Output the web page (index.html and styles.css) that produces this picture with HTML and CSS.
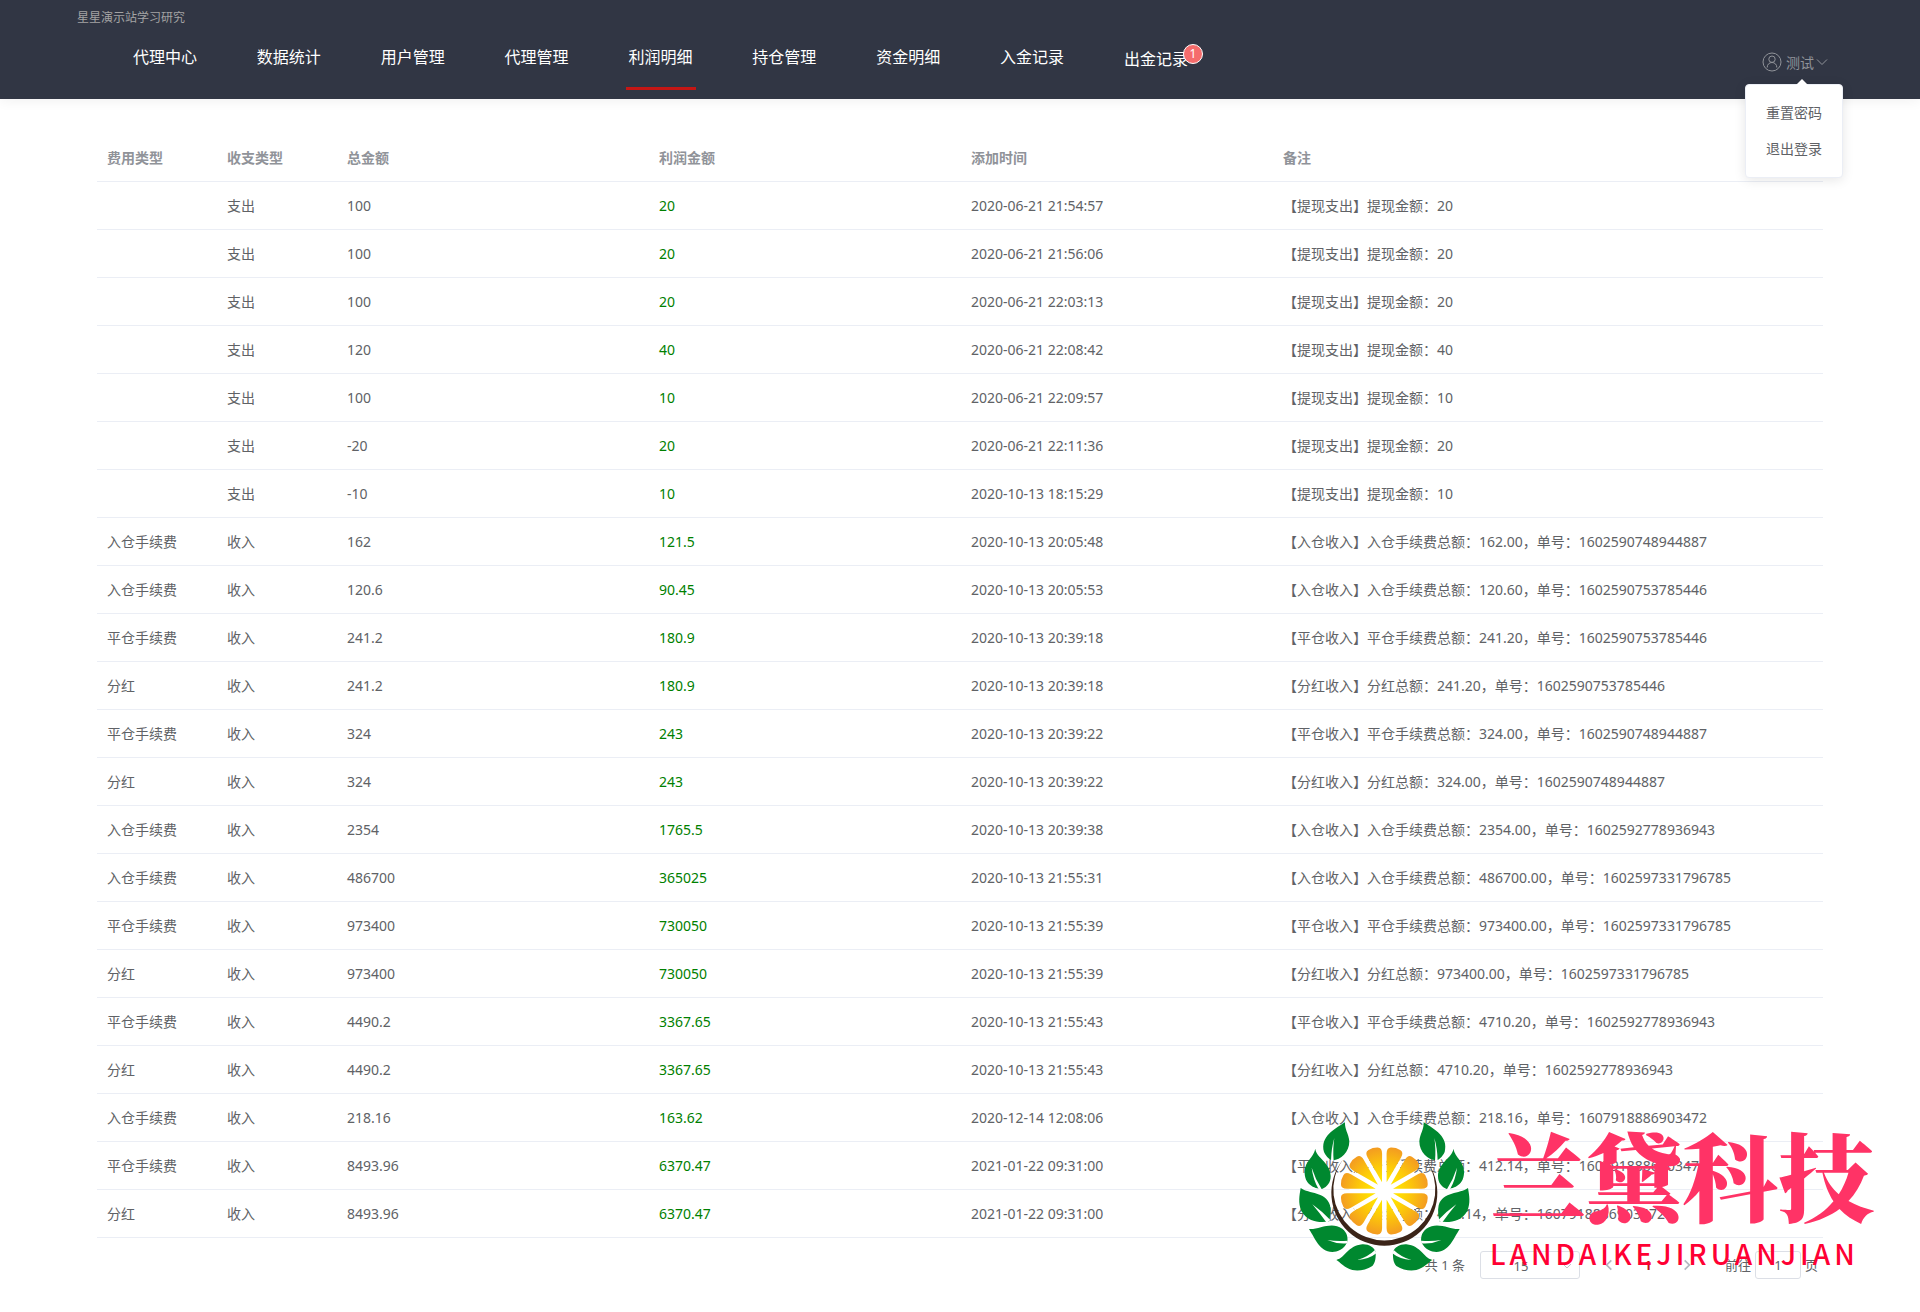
FILE: index.html
```html
<!DOCTYPE html>
<html lang="zh-CN">
<head>
<meta charset="utf-8">
<title>利润明细</title>
<link rel="stylesheet" href="styles.css">
</head>
<body>
<header class="header">
  <div class="brand">
    <p class="site-name">星星演示站学习研究</p>
    <nav class="nav">
      <a class="nav-link" href="#">代理中心</a>
      <a class="nav-link" href="#">数据统计</a>
      <a class="nav-link" href="#">用户管理</a>
      <a class="nav-link" href="#">代理管理</a>
      <a class="nav-link active" href="#">利润明细</a>
      <a class="nav-link" href="#">持仓管理</a>
      <a class="nav-link" href="#">资金明细</a>
      <a class="nav-link" href="#">入金记录</a>
      <a class="nav-link with-badge" href="#">出金记录<sup class="badge">1</sup></a>
    </nav>
  </div>
  <div class="user">
    <button class="user-button" type="button">
      <svg class="avatar" viewBox="0 0 20 20" fill="none" stroke="currentColor"><circle cx="10" cy="10" r="9"/><circle cx="10" cy="7.200" r="3.200"/><path d="M5.200 15.500c0-3 2-5 4.800-5s4.800 2 4.800 5"/></svg>
      <span>测试</span>
      <svg class="caret" viewBox="0 0 12 12" fill="none" stroke="currentColor"><path d="M1 3.500l5 5 5-5"/></svg>
    </button>
    <div class="menu">
      <a class="menu-item" href="#">重置密码</a>
      <a class="menu-item" href="#">退出登录</a>
    </div>
  </div>
</header>
<main class="main">
  <table class="table">
    <colgroup><col class="col-type"><col class="col-type"><col class="col-value"><col class="col-value"><col class="col-value"><col></colgroup>
    <thead>
      <tr><th>费用类型</th><th>收支类型</th><th>总金额</th><th>利润金额</th><th>添加时间</th><th>备注</th></tr>
    </thead>
    <tbody>
      <tr><td></td><td>支出</td><td>100</td><td class="profit">20</td><td>2020-06-21 21:54:57</td><td>【提现支出】提现金额：20</td></tr>
      <tr><td></td><td>支出</td><td>100</td><td class="profit">20</td><td>2020-06-21 21:56:06</td><td>【提现支出】提现金额：20</td></tr>
      <tr><td></td><td>支出</td><td>100</td><td class="profit">20</td><td>2020-06-21 22:03:13</td><td>【提现支出】提现金额：20</td></tr>
      <tr><td></td><td>支出</td><td>120</td><td class="profit">40</td><td>2020-06-21 22:08:42</td><td>【提现支出】提现金额：40</td></tr>
      <tr><td></td><td>支出</td><td>100</td><td class="profit">10</td><td>2020-06-21 22:09:57</td><td>【提现支出】提现金额：10</td></tr>
      <tr><td></td><td>支出</td><td>-20</td><td class="profit">20</td><td>2020-06-21 22:11:36</td><td>【提现支出】提现金额：20</td></tr>
      <tr><td></td><td>支出</td><td>-10</td><td class="profit">10</td><td>2020-10-13 18:15:29</td><td>【提现支出】提现金额：10</td></tr>
      <tr><td>入仓手续费</td><td>收入</td><td>162</td><td class="profit">121.5</td><td>2020-10-13 20:05:48</td><td>【入仓收入】入仓手续费总额：162.00，单号：1602590748944887</td></tr>
      <tr><td>入仓手续费</td><td>收入</td><td>120.6</td><td class="profit">90.45</td><td>2020-10-13 20:05:53</td><td>【入仓收入】入仓手续费总额：120.60，单号：1602590753785446</td></tr>
      <tr><td>平仓手续费</td><td>收入</td><td>241.2</td><td class="profit">180.9</td><td>2020-10-13 20:39:18</td><td>【平仓收入】平仓手续费总额：241.20，单号：1602590753785446</td></tr>
      <tr><td>分红</td><td>收入</td><td>241.2</td><td class="profit">180.9</td><td>2020-10-13 20:39:18</td><td>【分红收入】分红总额：241.20，单号：1602590753785446</td></tr>
      <tr><td>平仓手续费</td><td>收入</td><td>324</td><td class="profit">243</td><td>2020-10-13 20:39:22</td><td>【平仓收入】平仓手续费总额：324.00，单号：1602590748944887</td></tr>
      <tr><td>分红</td><td>收入</td><td>324</td><td class="profit">243</td><td>2020-10-13 20:39:22</td><td>【分红收入】分红总额：324.00，单号：1602590748944887</td></tr>
      <tr><td>入仓手续费</td><td>收入</td><td>2354</td><td class="profit">1765.5</td><td>2020-10-13 20:39:38</td><td>【入仓收入】入仓手续费总额：2354.00，单号：1602592778936943</td></tr>
      <tr><td>入仓手续费</td><td>收入</td><td>486700</td><td class="profit">365025</td><td>2020-10-13 21:55:31</td><td>【入仓收入】入仓手续费总额：486700.00，单号：1602597331796785</td></tr>
      <tr><td>平仓手续费</td><td>收入</td><td>973400</td><td class="profit">730050</td><td>2020-10-13 21:55:39</td><td>【平仓收入】平仓手续费总额：973400.00，单号：1602597331796785</td></tr>
      <tr><td>分红</td><td>收入</td><td>973400</td><td class="profit">730050</td><td>2020-10-13 21:55:39</td><td>【分红收入】分红总额：973400.00，单号：1602597331796785</td></tr>
      <tr><td>平仓手续费</td><td>收入</td><td>4490.2</td><td class="profit">3367.65</td><td>2020-10-13 21:55:43</td><td>【平仓收入】平仓手续费总额：4710.20，单号：1602592778936943</td></tr>
      <tr><td>分红</td><td>收入</td><td>4490.2</td><td class="profit">3367.65</td><td>2020-10-13 21:55:43</td><td>【分红收入】分红总额：4710.20，单号：1602592778936943</td></tr>
      <tr><td>入仓手续费</td><td>收入</td><td>218.16</td><td class="profit">163.62</td><td>2020-12-14 12:08:06</td><td>【入仓收入】入仓手续费总额：218.16，单号：1607918886903472</td></tr>
      <tr><td>平仓手续费</td><td>收入</td><td>8493.96</td><td class="profit">6370.47</td><td>2021-01-22 09:31:00</td><td>【平仓收入】平仓手续费总额：412.14，单号：1607918886903472</td></tr>
      <tr><td>分红</td><td>收入</td><td>8493.96</td><td class="profit">6370.47</td><td>2021-01-22 09:31:00</td><td>【分红收入】分红总额：412.14，单号：1607918886903472</td></tr>
    </tbody>
  </table>
  <div class="pagination">
    <span>共 1 条</span>
    <span class="size-box">
      <select class="size-select" aria-label="每页条数"><option>15</option></select>
      <svg class="size-caret" viewBox="0 0 12 12" fill="none" stroke="currentColor"><path d="M2 4l4 4 4-4"/></svg>
    </span>
    <div class="pager">
      <button class="pager-button" type="button" aria-label="上一页"><svg class="arrow" viewBox="0 0 12 12" fill="none" stroke="currentColor" stroke-width="1.500"><path d="M8 2L4 6l4 4"/></svg></button>
      <button class="pager-button current" type="button">1</button>
      <button class="pager-button" type="button" aria-label="下一页"><svg class="arrow" viewBox="0 0 12 12" fill="none" stroke="currentColor" stroke-width="1.500"><path d="M4 2l4 4-4 4"/></svg></button>
    </div>
    <label class="jump">前往<input class="jump-input" type="text" value="1">页</label>
  </div>
</main>
<div class="watermark">
  <svg class="logo" viewBox="0 0 546 480">
    <defs>
      <radialGradient id="orange" gradientUnits="userSpaceOnUse" cx="0" cy="0" r="134">
        <stop offset="0.300" stop-color="#ffe100"/><stop offset="0.550" stop-color="#fdcb08"/><stop offset="1" stop-color="#f39a22"/>
      </radialGradient>
      <path id="wedge" fill="url(#orange)" d="M27 0L110 22.500Q128 27 131 14Q135 0 131 -14Q128 -27 110 -22.500Z"/>
      <g id="slices">
        <use href="#wedge" transform="rotate(15)"/><use href="#wedge" transform="rotate(45)"/><use href="#wedge" transform="rotate(75)"/>
      </g>
      <g id="leaves">
        <g fill="#00882f">
          <path d="M153 19C120 40 78 62 90 108C98 124 108 132 116 133C140 133 166 108 166 76C164 52 152 42 153 19Z"/>
          <path d="M64 98C66 125 110 140 110 180C110 200 100 212 84 219C60 218 30 205 32 165C34 135 58 125 64 98Z"/>
          <path d="M20 216C45 235 95 225 108 268C112 285 108 300 106 316C80 322 40 318 22 285C12 260 16 240 20 216Z"/>
          <path d="M45 339C75 342 110 315 145 338C160 350 162 365 160 378C150 400 130 408 115 408C75 405 65 370 45 339Z"/>
          <path d="M127 432C155 425 160 390 205 385C225 384 240 395 245 407C246 425 244 440 235 450C215 464 190 465 175 462C150 455 140 440 127 432Z"/>
        </g>
        <g fill="#fff">
          <path d="M111 134Q112 96 121 66Q116 96 119 136Z"/>
          <path d="M74 220Q57 190 53 155Q64 190 84 221Z"/>
          <path d="M98 320Q76 290 55 265Q84 286 109 312Z"/>
          <path d="M161 374Q130 377 100 372Q130 385 160 382Z"/>
          <path d="M243 402Q220 424 190 432Q225 430 247 412Z"/>
        </g>
      </g>
    </defs>
    <path stroke="#fff" stroke-width="13" d="M166 225H376M271 120V330M180 173L362 278M180 278L362 173M219 134L323 316M323 134L219 316"/>
    <circle cx="271" cy="225" r="30" fill="#fff"/>
    <g transform="translate(271 225)">
      <use href="#slices"/><use href="#slices" transform="rotate(90)"/><use href="#slices" transform="rotate(180)"/><use href="#slices" transform="rotate(270)"/>
    </g>
    <path fill="#3b2418" d="M146 132A159 159 0 1 0 396 132A153 153 0 1 1 146 132Z"/>
    <use href="#leaves"/>
    <use href="#leaves" transform="translate(542 0) scale(-1 1)"/>
  </svg>
  <div class="mark-text">
    <strong class="mark-name">兰黛科技</strong>
    <span class="mark-latin">LANDAIKEJIRUANJIAN</span>
  </div>
</div>
</body>
</html>
```
FILE: styles.css
```css
* {
  box-sizing: border-box;
}

body {
  position: relative;
  min-height: 100vh;
  margin: 0;
  background: #fff;
  color: #606266;
  font-family: "Noto Sans", "Noto Sans CJK SC", sans-serif;
  font-size: 14px;
}

a {
  color: inherit;
  text-decoration: none;
}

button,
input,
select {
  color: inherit;
  font: inherit;
}

/* Header */
.header {
  display: flex;
  justify-content: space-between;
  height: 99px;
  padding: 0 77px;
  background: #313644;
  box-shadow: 0 2px 12px rgba(0, 0, 0, 0.06);
}

.brand {
  flex: 0 1 1114px;
}

.site-name {
  margin: 0;
  padding-top: 8px;
  color: #a3a3a3;
  font-size: 12px;
  line-height: 20px;
}

.nav {
  display: flex;
  justify-content: space-between;
  padding: 12px 0 0 53px;
  color: #fff;
  font-size: 16px;
}

.nav-link {
  width: 70px;
  height: 50px;
  line-height: 34px;
  text-align: center;
  white-space: nowrap;
}

.nav-link.active {
  border-bottom: 3px solid #c51614;
}

.with-badge {
  position: relative;
  line-height: 38px;
}

.badge {
  position: absolute;
  top: 4px;
  right: -12px;
  width: 20px;
  height: 20px;
  border: 1px solid #fff;
  border-radius: 10px;
  background: #f56c6c;
  font-size: 12px;
  line-height: 18px;
}

.user {
  position: relative;
  align-self: flex-start;
  margin: 50px 15px 0 0;
}

.user-button {
  display: flex;
  align-items: center;
  gap: 4px;
  height: 24px;
  padding: 0;
  border: 0;
  background: none;
  color: #909399;
}

.avatar {
  width: 20px;
  height: 20px;
}

.caret {
  width: 12px;
  height: 12px;
  margin-left: -2px;
}

.menu {
  position: absolute;
  z-index: 2;
  top: 34px;
  right: -15px;
  width: 98px;
  padding: 10px 0;
  border: 1px solid #ebeef5;
  border-radius: 4px;
  background: #fff;
  box-shadow: 0 2px 12px rgba(0, 0, 0, 0.1);
}

.menu::before {
  position: absolute;
  top: -6px;
  left: 50px;
  border: 6px solid transparent;
  border-top: 0;
  border-bottom-color: #fff;
  content: "";
}

.menu-item {
  display: block;
  padding: 0 20px;
  line-height: 36px;
}

/* Profit table */
.main {
  padding: 35px 97px 32px;
}

.table {
  width: 100%;
  border-collapse: separate;
  border-spacing: 0;
  table-layout: fixed;
}

.col-type {
  width: 120px;
}

.col-value {
  width: 312px;
}

.table th,
.table td {
  height: 48px;
  padding: 0 10px;
  border-bottom: 1px solid #ebeef5;
  line-height: 23px;
  text-align: left;
  white-space: nowrap;
}

.table th {
  color: #909399;
  font-weight: 700;
}

.table .profit {
  color: #008000;
}

/* Pagination */
.pagination {
  display: flex;
  align-items: center;
  justify-content: flex-end;
  padding: 13px 5px 0 0;
  font-size: 13px;
  line-height: 28px;
}

.size-box {
  position: relative;
  margin: 0 11px 0 15px;
}

.size-select {
  display: block;
  width: 100px;
  height: 28px;
  padding: 0 18px 0 0;
  border: 1px solid #dcdfe6;
  border-radius: 3px;
  appearance: none;
  background: #fff;
  text-align: center;
  text-align-last: center;
}

.size-caret {
  position: absolute;
  top: 9px;
  right: 7px;
  width: 12px;
  height: 12px;
  color: #c0c4cc;
}

.pager {
  display: flex;
  gap: 3px;
}

.pager-button {
  display: flex;
  align-items: center;
  justify-content: center;
  width: 36px;
  height: 28px;
  padding: 0;
  border: 0;
  background: none;
  color: #b4b8c0;
}

.pager-button.current {
  color: #c51614;
  font-weight: 700;
}

.arrow {
  width: 14px;
  height: 14px;
}

.jump {
  display: flex;
  align-items: center;
  gap: 4px;
  margin-left: 20px;
}

.jump-input {
  width: 46px;
  height: 28px;
  padding: 0;
  border: 1px solid #dcdfe6;
  border-radius: 3px;
  background: #fff;
  text-align: center;
}

/* Company watermark laid over the page corner */
.watermark {
  position: absolute;
  right: 44px;
  bottom: 36px;
  display: flex;
  gap: 14px;
  pointer-events: none;
}

.logo {
  width: 182px;
  height: 160px;
}

.mark-text {
  display: flex;
  flex-direction: column;
  width: 386px;
}

.mark-name {
  color: #ff3366;
  font-family: "Noto Serif CJK SC", "Noto Sans CJK SC", serif;
  font-size: 96px;
  font-weight: 900;
  line-height: 114px;
  white-space: nowrap;
}

.mark-latin {
  color: #ff0033;
  font-family: "Noto Sans CJK SC", sans-serif;
  font-size: 28px;
  font-weight: 500;
  letter-spacing: 4px;
  line-height: 46px;
}
```
